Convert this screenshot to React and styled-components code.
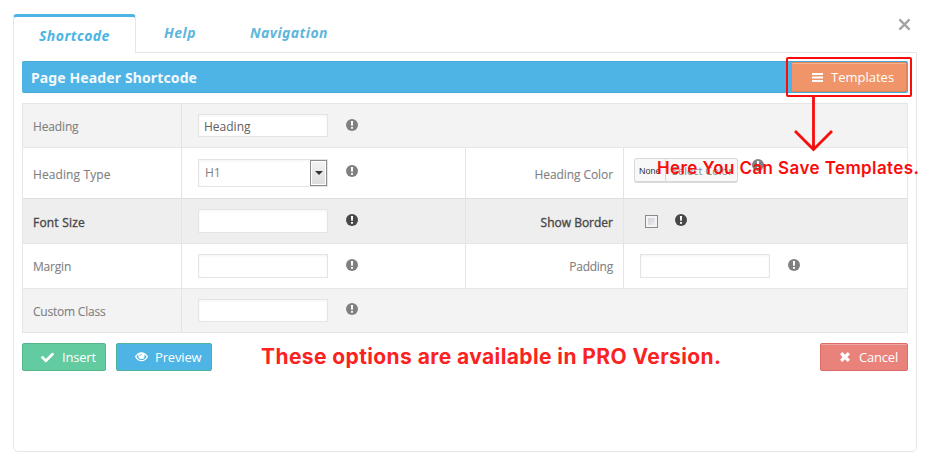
import React from "react";
import styled, { createGlobalStyle } from "styled-components";
import { FaCheck } from "react-icons/fa";

const Global = createGlobalStyle`
  * { box-sizing: border-box; }
  body { margin: 0; background: #fff; font-family: "Open Sans", sans-serif; overflow: hidden; }
`;

const Page = styled.div`
  position: relative;
  width: 930px;
  height: 465px;
  padding: 14px 13px 0;
`;

const Header = styled.div`
  display: flex;
  align-items: flex-start;
  height: 39px;
  width: 904px;
`;

const Tab = styled.div`
  width: ${(p) => p.$w}px;
  height: ${(p) => (p.$active ? 39 : 38)}px;
  padding-left: ${(p) => p.$pl}px;
  color: ${(p) => (p.$active ? "#4cb4e5" : "#5fb6dc")};
  font: italic 700 14px/${(p) => (p.$active ? 37 : 38)}px "Noto Sans", sans-serif;
  letter-spacing: ${(p) => p.$ls || 0}px;
  white-space: nowrap;
  ${(p) =>
    p.$active &&
    `background: #fff; position: relative; border: 1px solid #e6e6e6;
     border-top: 3px solid #4db4e5; border-bottom: 0; border-radius: 4px 4px 0 0;`}
`;

const CloseIcon = styled.svg`
  display: block;
  margin: 4px 6px 0 auto;
`;

const Panel = styled.div`
  width: 904px;
  height: 400px;
  margin-top: -1px;
  border: 1px solid #e6e6e6;
  border-radius: 0 0 5px 5px;
  padding: 8px;
`;

const TitleBar = styled.div`
  display: flex;
  align-items: center;
  justify-content: space-between;
  height: 32px;
  padding: 0 1px 0 9px;
  border: 1px solid #47a7d6;
  border-width: 1px 0;
  border-radius: 2px;
  background: #4db4e5;
`;

const Title = styled.div`
  color: #f3f9fc;
  font: 700 14px/30px "Noto Sans", sans-serif;
  padding-top: 2px;
  letter-spacing: 0.12px;
`;

const Button = styled.button`
  display: flex;
  align-items: center;
  width: ${(p) => p.$w}px;
  height: ${(p) => p.$h || 28}px;
  padding: 0 0 0 ${(p) => p.$pl}px;
  gap: ${(p) => p.$gap}px;
  border: 1px solid ${(p) => p.$edge};
  border-radius: 2px;
  background: ${(p) => p.$bg};
  box-shadow: ${(p) => (p.$lit ? "inset 0 1px 0 rgba(255,255,255,.3)" : "none")};
  color: #fff;
  font: 13px/26px "Open Sans", sans-serif;
  letter-spacing: ${(p) => p.$ls || 0}px;
  white-space: nowrap;
  svg { flex: none; }
`;

const Table = styled.div`
  margin-top: 10px;
  width: 886px;
  border: 1px solid #e6e6e6;
  border-top: 0;
`;

const Row = styled.div`
  display: grid;
  grid-template-columns: ${(p) => (p.$single ? "158px 1fr" : "158px 284px 158px 1fr")};
  height: ${(p) => p.$h}px;
  border-top: 1px solid ${(p) => (p.$strong ? "#dedede" : "#e6e6e6")};
  background: ${(p) => p.$bg};
  color: ${(p) => (p.$strong ? "#484848" : "#808080")};
`;

const Cell = styled.div`
  display: flex;
  align-items: center;
  border-left: 1px solid #e4e4e4;
  padding-left: ${(p) => p.$pl || 16}px;
`;

const Label = styled.div`
  display: flex;
  align-items: center;
  justify-content: ${(p) => (p.$right ? "flex-end" : "flex-start")};
  padding: ${(p) => p.$pt || 2}px ${(p) => (p.$right ? 10 : 0)}px 0 10px;
  border-left: ${(p) => (p.$right ? "1px solid #e4e4e4" : "0")};
  font: 12px/16px "Open Sans", sans-serif;
  letter-spacing: ${(p) => p.$ls || 0}px;
  -webkit-text-stroke: ${(p) => (p.$strong ? 0.35 : 0.1)}px currentColor;
`;

const Input = styled.div`
  width: 130px;
  height: ${(p) => p.$h || 24}px;
  border: 1px solid #e4e4e4;
  background: #fff;
  box-shadow: inset 0 1px 3px rgba(0, 0, 0, 0.05);
  padding-left: 5px;
  color: #606060;
  font: 12px/23px "Open Sans", sans-serif;
`;

const Select = styled(Input)`
  display: flex;
  justify-content: space-between;
  color: #808080;
  padding-left: 6px;
  line-height: 26px;
`;

const Arrow = styled.span`
  display: grid;
  place-items: center;
  width: 17px;
  height: 26px;
  border: 1px solid #8d8d8d;
  box-shadow: inset 0 0 0 1px #fff;
  background: linear-gradient(#f4f4f4, #dcdcdc);
  &::before {
    content: "";
    border: 4px solid transparent;
    border-top-color: #333;
    border-bottom: 0;
  }
`;

const InfoSvg = styled.svg`
  flex: none;
  margin: ${(p) => p.$mt || -2}px 0 0 ${(p) => p.$ml || 18}px;
`;

const ColorPicker = styled.div`
  display: flex;
  width: 104px;
  height: 25px;
  margin-top: -5px;
  border: 1px solid #d9d9d9;
  border-bottom-width: 2px;
  border-radius: 3px;
  background: #f8f8f8;
  font: 11px/23px "Open Sans", sans-serif;
  color: #888;
  white-space: nowrap;
`;

const None = styled.span`
  width: 31px;
  padding-left: 4px;
  border-right: 1px solid #d9d9d9;
  color: #333;
  font: 9px/24px "Liberation Sans", sans-serif;
  margin-right: 6px;
`;

const Checkbox = styled.div`
  width: 13px;
  height: 13px;
  border: 1px solid #8a8a8a;
  background: linear-gradient(135deg, #c6cad0, #f4f4f4);
  box-shadow: inset 0 0 0 2px #f5f5f5;
`;

const Footer = styled.div`
  display: flex;
  gap: 10px;
  margin-top: 10px;
`;

const Notice = styled.div`
  flex: 1;
  padding-left: 39px;
  color: #fb2222;
  font: 700 21px/28px Inter, sans-serif;
  letter-spacing: 0.4px;
  white-space: nowrap;
`;

const Highlight = styled.div`
  position: absolute;
  left: 786px;
  top: 57px;
  width: 126px;
  height: 40px;
  border: 2px solid #f80c0c;
  border-radius: 2px;
`;

const Pointer = styled.svg`
  position: absolute;
  left: 792px;
  top: 96px;
`;

const Callout = styled.div`
  position: absolute;
  left: 657px;
  top: 156px;
  color: #fb0c0c;
  font: 600 17px/24px Inter, sans-serif;
  letter-spacing: 0.4px;
  white-space: nowrap;
`;

function Info(props) {
  return (
    <InfoSvg width="12" height="12" viewBox="0 0 12 12" {...props}>
      <circle cx="6" cy="6" r="6" fill="currentColor" />
      <path d="M4.9 2h2.2l-.25 4.8h-1.7zM5 7.9h2v1.8H5z" fill="#fff" />
    </InfoSvg>
  );
}

function EyeIcon() {
  return (
    <svg width="13" height="11" viewBox="0 0 13 11">
      <path d="M.7 4.7Q3 .8 6.5 .8t5.8 3.9Q10 8.7 6.5 8.7T.7 4.7z" fill="none" stroke="#fff" strokeWidth="1.3" />
      <circle cx="6.5" cy="3.9" r="3.1" fill="#fff" />
      <path d="M4.9 3.9q0-1.6 1.6-1.6" fill="none" stroke="#4db4e5" strokeWidth=".8" />
    </svg>
  );
}

export default function App() {
  return (
    <Page>
      <Global />
      <Header>
        <Tab $active $w={123} $pl={25} $ls={0.45}>Shortcode</Tab>
        <Tab $w={86} $pl={28} $ls={0.5}>Help</Tab>
        <Tab $w={120} $pl={28} $ls={0.45}>Navigation</Tab>
        <CloseIcon width="13" height="13" viewBox="0 0 13 13">
          <path d="M1.4 1.4 11.6 11.6M11.6 1.4 1.4 11.6" stroke="#a3a3a3" strokeWidth="2.3" />
        </CloseIcon>
      </Header>
      <Panel>
        <TitleBar>
          <Title>Page Header Shortcode</Title>
          <Button $w={116} $h={30} $pl={20} $gap={8} $bg="#ef9569" $edge="#dc8458" $lit>
            <svg width="11" height="9" viewBox="0 0 11 9">
              <path d="M0 1h11M0 4.5h11M0 8h11" stroke="#fff" strokeWidth="2" />
            </svg>
            Templates
          </Button>
        </TitleBar>
        <Table>
          <Row $h={44} $bg="#f3f3f3" $single>
            <Label $ls={-0.15}>Heading</Label>
            <Cell><Input $h={23}>Heading</Input><Info /></Cell>
          </Row>
          <Row $h={51} $bg="#fff">
            <Label $ls={0.1} $pt={4}>Heading Type</Label>
            <Cell><Select $h={28}>H1<Arrow /></Select><Info $mt={-4} /></Cell>
            <Label $right $ls={-0.08} $pt={4}>Heading Color</Label>
            <Cell $pl={10}>
              <ColorPicker><None>None</None>Select Color</ColorPicker>
              <Info $ml={14} $mt={-16} />
            </Cell>
          </Row>
          <Row $h={45} $bg="#eeeeee" $strong>
            <Label $strong $ls={0.2} $pt={4}>Font Size</Label>
            <Cell><Input /><Info /></Cell>
            <Label $right $strong $pt={4}>Show Border</Label>
            <Cell $pl={21}><Checkbox /><Info $ml={17} /></Cell>
          </Row>
          <Row $h={45} $bg="#fff">
            <Label $ls={-0.2}>Margin</Label>
            <Cell><Input /><Info /></Cell>
            <Label $right $ls={-0.25}>Padding</Label>
            <Cell><Input /><Info /></Cell>
          </Row>
          <Row $h={44} $bg="#f3f3f3" $single>
            <Label $ls={-0.22}>Custom Class</Label>
            <Cell><Input $h={23} /><Info $mt={-3} /></Cell>
          </Row>
        </Table>
        <Footer>
          <Button $w={84} $pl={18} $gap={8} $ls={-0.2} $bg="#62cb9f" $edge="#54b78c">
            <FaCheck size={13} />Insert
          </Button>
          <Button $w={96} $pl={18} $gap={7} $ls={-0.15} $bg="#4db4e5" $edge="#50b49c">
            <EyeIcon />Preview
          </Button>
          <Notice>These options are available in PRO Version.</Notice>
          <Button $w={88} $pl={19} $gap={9} $ls={-0.2} $bg="#ea827c" $edge="#dd6a65" $lit>
            <svg width="10" height="10" viewBox="0 0 10 10">
              <path d="M2.3 0 5 2.7 7.7 0 10 2.3 7.3 5 10 7.7 7.7 10 5 7.3 2.3 10 0 7.7 2.7 5 0 2.3z" fill="#fff" />
            </svg>
            Cancel
          </Button>
        </Footer>
      </Panel>
      <Callout>Here You Can Save Templates.</Callout>
      <Highlight />
      <Pointer width="43" height="57" viewBox="0 0 43 57">
        <path d="M21.5 0V54M3 35 21.5 53.5 40 35" fill="none" stroke="#f80c0c" strokeWidth="2.8" />
      </Pointer>
    </Page>
  );
}
